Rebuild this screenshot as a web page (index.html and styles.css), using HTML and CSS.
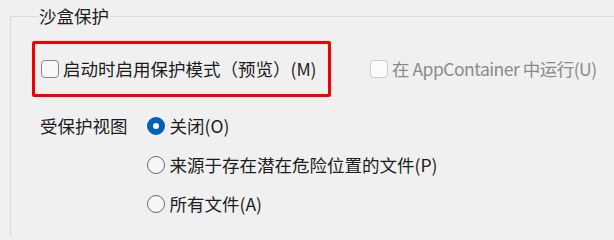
FILE: index.html
```html
<!DOCTYPE html>
<html lang="zh-CN">
<head>
<meta charset="utf-8">
<title>沙盒保护</title>
<link rel="stylesheet" href="styles.css">
</head>
<body>
<fieldset class="group">
  <legend class="group-title">沙盒保护</legend>
  <div class="top-row">
    <div class="highlight">
      <label class="check">
        <span class="box"></span>
        <span class="text">启动时启用保护模式（预览）(M)</span>
      </label>
    </div>
    <label class="check disabled">
      <span class="box"></span>
      <span class="text">在 AppContainer 中运行(U)</span>
    </label>
  </div>
  <div class="view-row">
    <div class="view-label">受保护视图</div>
    <div class="radios">
      <label class="radio checked"><span class="dot"></span><span class="text">关闭(O)</span></label>
      <label class="radio"><span class="dot"></span><span class="text">来源于存在潜在危险位置的文件(P)</span></label>
      <label class="radio"><span class="dot"></span><span class="text">所有文件(A)</span></label>
    </div>
  </div>
</fieldset>
</body>
</html>
```
FILE: styles.css
```css
html, body {
  margin: 0;
  padding: 0;
  background: #f0f0f0;
  overflow: hidden;
}
body {
  width: 614px;
  height: 236px;
  font-family: "Noto Sans CJK SC", "Noto Sans", sans-serif;
  font-size: 17.5px;
  line-height: 22px;
  color: #1c1c1c;
  padding-top: 5px;
  box-sizing: border-box;
}
.group {
  margin: 0 0 0 10px;
  border: 1px solid #dadada;
  border-right: none;
  padding: 14px 0 21px 21px;
  min-width: 0;
}
.group-title {
  margin-left: 6px;
  padding: 0 1px;
  line-height: 22px;
}
.top-row {
  display: flex;
  align-items: center;
  gap: 39px;
}
.highlight {
  box-sizing: border-box;
  width: 299px;
  height: 56px;
  border: 3px solid #f50000;
  border-radius: 2px;
  padding-left: 6px;
  display: flex;
  align-items: center;
}
.check, .radio {
  display: flex;
  align-items: center;
  gap: 4px;
  white-space: nowrap;
}
.box {
  box-sizing: border-box;
  width: 18px;
  height: 18px;
  border: 1px solid #858585;
  border-radius: 4px;
  background: #f7f7f7;
  flex: none;
}
.check.disabled .box {
  border-color: #cbcbcb;
  background: #fbfbfb;
}
.check.disabled .text {
  color: #8a8a8a;
  letter-spacing: -0.5px;
}
.view-row {
  display: flex;
  margin-top: 18px;
  gap: 19px;
}
.view-label {
  margin-left: 8px;
}
.radios {
  display: flex;
  flex-direction: column;
  gap: 17px;
}
.radio {
  gap: 5px;
}
.dot {
  box-sizing: border-box;
  width: 18px;
  height: 18px;
  border-radius: 50%;
  border: 1px solid #6b6b6b;
  background: #f6f6f6;
  flex: none;
}
.radio.checked .dot {
  border: 6px solid #005fb8;
  background: #ffffff;
}
```
